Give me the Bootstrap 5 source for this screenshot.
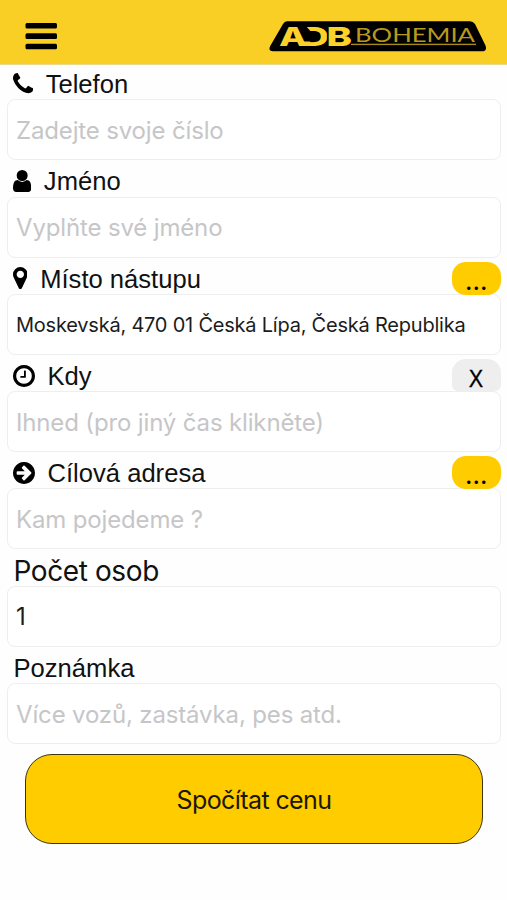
<!DOCTYPE html>
<html lang="cs">
<head>
<meta charset="utf-8">
<meta name="viewport" content="width=device-width, initial-scale=1">
<title>ADB Bohemia</title>
<link href="https://cdn.jsdelivr.net/npm/bootstrap@5.3.0/dist/css/bootstrap.min.css" rel="stylesheet">
<style>
body{font-family:"Liberation Sans",Arial,sans-serif;color:#111;background:#fefefe;overflow:hidden}
.topbar{height:65px;background:#f9cf25;border-bottom:1px solid #e9d98c;padding:0 20px 0 25px}
.menu-btn{width:32px;height:27px;margin-top:8px}
.logo{width:218px;height:32px;margin-top:7px}
.field{height:97.3px}
.field-head{height:34.3px;padding-left:5.5px}
.field-head label{font-size:25.6px;line-height:34px;padding-top:4px;gap:13px;white-space:nowrap}
.field-head svg{height:22px;fill:#000;display:block;margin-top:-1px}
.field .form-control{height:61px;border:1.5px solid #eee;border-radius:8px;padding:1px 8px 0;font-family:Inter,"Noto Sans",sans-serif;font-size:24px;letter-spacing:-.15px;color:#1c1c1c;background:#fff}
.field .form-control::placeholder{color:#c6c6c8;opacity:1}
.field .form-control.address{font-size:20px;letter-spacing:-.22px}
.field-head label.text-only{padding:2.5px 0 0 1px}
.field-head label.persons{font-family:Inter,"Noto Sans",sans-serif;font-size:28px;letter-spacing:-.4px}
.pill{width:48.5px;height:33px;margin:2px .5px 0 0;border-radius:14px;background:#fc0;font-family:Inter,sans-serif;font-size:26px;line-height:38px;color:#000}
.pill-clear{height:32px;background:#eee;border-radius:14px 14px 6px 6px;font-family:"Liberation Sans",Arial,sans-serif;font-size:24px;line-height:40px;-webkit-text-stroke:.3px #000}
.pill-clear span{display:inline-block;transform:scaleX(.9)}
.submit{height:90.5px;margin:7.5px 18px 0;padding:3px 0 0;border:1.5px solid #3d3510;border-radius:27px;background:#fc0;font-family:Inter,"Noto Sans",sans-serif;font-size:25px;letter-spacing:-.6px;color:#1c1700}
</style>
<script src="https://cdn.jsdelivr.net/npm/bootstrap@5.3.0/dist/js/bootstrap.bundle.min.js"></script>
</head>
<body>
<header class="topbar d-flex align-items-center justify-content-between">
  <button class="menu-btn btn p-0 border-0 d-flex" aria-label="Menu">
    <svg width="32" height="27" viewBox="0 0 32 27"><g fill="#000"><rect x=".5" y="0" width="31.5" height="5.6" rx="1.5"/><rect x=".5" y="10.3" width="31.5" height="5.6" rx="1.5"/><rect x=".5" y="20.7" width="31.5" height="5.6" rx="1.5"/></g></svg>
  </button>
  <svg class="logo" viewBox="269 20 218 32" role="img" aria-label="ADB Bohemia">
    <path d="M287 21.3H470Q473 21.3 475 24L485.500 45.500Q487.500 51.300 482 51.300H273Q267.500 51.300 270.500 45.500L283 24Q284.500 21.300 287 21.300Z" fill="#000"/>
    <g fill="#fbd12a" font-family="Inter" font-weight="800" font-size="26.300">
      <text x="301" y="45.800" textLength="28" lengthAdjust="spacingAndGlyphs">D</text>
      <path d="M299 26H306L313 34V41.500H303Z" fill="#000"/>
      <text x="279" y="45.800" textLength="28" lengthAdjust="spacingAndGlyphs">A</text>
      <text x="326.500" y="45.800" textLength="25.500" lengthAdjust="spacingAndGlyphs" stroke="#000" stroke-width="2.400" paint-order="stroke">B</text>
    </g>
    <text x="355" y="42" font-family="Lato" font-size="19.500" textLength="120" lengthAdjust="spacingAndGlyphs" fill="#b99a1c">BOHEMIA</text>
    <rect x="351" y="43.700" width="125" height="1.400" fill="#a88b18"/>
  </svg>
</header>
<main class="px-0">
<form style="padding:0 6px 0 7px">
  <div class="field">
    <div class="field-head d-flex justify-content-between">
      <label for="tel" class="d-flex align-items-center"><svg viewBox="192 128 1408 1536"><path d="M1600 1240q0 27-10 70.500t-21 68.500q-21 50-122 106-94 51-186 51-27 0-53-3.500t-57.500-12.500-47-14.500-55.500-20.500-49-18q-98-35-175-83-127-79-264-216t-216-264q-48-77-83-175-3-9-18-49t-20.500-55.500-14.500-47-12.500-57.500-3.500-53q0-92 51-186 56-101 106-122 25-11 68.500-21t70.500-10q14 0 21 3 18 6 53 76 11 19 30 54t35 63.500 31 53.500q3 4 17.500 25t21.500 35.500 7 28.500q0 20-28.500 50t-62 55-62 53-28.500 46q0 9 5 22.500t8.500 20.500 14 24 11.500 19q76 137 174 235t235 174q2 1 19 11.500t24 14 20.500 8.500 22.500 5q18 0 46-28.500t53-62 55-62 50-28.500q14 0 28.500 7t35.500 21.500 25 17.500q25 15 53.500 31t63.500 35 54 30q70 35 76 53 3 7 3 21z"/></svg><span>Telefon</span></label>
    </div>
    <input id="tel" type="text" class="form-control shadow-none" placeholder="Zadejte svoje číslo">
  </div>
  <div class="field">
    <div class="field-head d-flex justify-content-between">
      <label for="name" class="d-flex align-items-center"><svg viewBox="256 128 1280 1536"><path d="M1536 1399q0 109-62.500 187t-150.500 78h-854q-88 0-150.500-78t-62.500-187q0-85 8.500-160.500t31.500-152 58.500-131 94-89 134.500-34.500q131 128 313 128t313-128q76 0 134.500 34.500t94 89 58.500 131 31.500 152 8.500 160.500zm-256-887q0 159-112.500 271.500t-271.500 112.500-271.500-112.500-112.500-271.500 112.500-271.500 271.500-112.500 271.500 112.500 112.500 271.500z"/></svg><span>Jméno</span></label>
    </div>
    <input id="name" type="text" class="form-control shadow-none" placeholder="Vyplňte své jméno">
  </div>
  <div class="field">
    <div class="field-head d-flex justify-content-between">
      <label for="from" class="d-flex align-items-center"><svg viewBox="384 128 1024 1536"><path d="M1152 640q0-106-75-181t-181-75-181 75-75 181 75 181 181 75 181-75 75-181zm256 0q0 109-33 179l-364 774q-16 33-47.500 52t-67.500 19-67.500-19-46.500-52l-365-774q-33-70-33-179 0-212 150-362t362-150 362 150 150 362z"/></svg><span>Místo nástupu</span></label>
      <button type="button" class="pill btn border-0 p-0">...</button>
    </div>
    <input id="from" type="text" class="form-control address shadow-none" value="Moskevská, 470 01 Česká Lípa, Česká Republika">
  </div>
  <div class="field">
    <div class="field-head d-flex justify-content-between">
      <label for="when" class="d-flex align-items-center"><svg viewBox="128 128 1536 1536"><path d="M1024 544v448q0 14-9 23t-23 9h-320q-14 0-23-9t-9-23v-64q0-14 9-23t23-9h224v-352q0-14 9-23t23-9h64q14 0 23 9t9 23zm416 352q0-148-73-273t-198-198-273-73-273 73-198 198-73 273 73 273 198 198 273 73 273-73 198-198 73-273zm224 0q0 209-103 385.500t-279.500 279.500-385.500 103-385.500-103-279.500-279.500-103-385.500 103-385.500 279.500-279.500 385.500-103 385.500 103 279.500 279.500 103 385.500z"/></svg><span>Kdy</span></label>
      <button type="button" class="pill pill-clear btn border-0 p-0"><span>X</span></button>
    </div>
    <input id="when" type="text" class="form-control shadow-none" placeholder="Ihned (pro jiný čas klikněte)">
  </div>
  <div class="field">
    <div class="field-head d-flex justify-content-between">
      <label for="to" class="d-flex align-items-center"><svg viewBox="128 128 1536 1536"><path d="M1413 896q0-27-18-45l-91-91-362-362q-18-18-45-18t-45 18l-91 91q-18 18-18 45t18 45l189 189h-502q-26 0-45 19t-19 45v128q0 26 19 45t45 19h502l-189 189q-19 19-19 45t19 45l91 91q18 18 45 18t45-18l362-362 91-91q18-18 18-45zm251 0q0 209-103 385.500t-279.500 279.500-385.500 103-385.500-103-279.500-279.500-103-385.500 103-385.500 279.500-279.500 385.500-103 385.500 103 279.500 279.500 103 385.500z" fill-rule="evenodd"/></svg><span>Cílová adresa</span></label>
      <button type="button" class="pill btn border-0 p-0">...</button>
    </div>
    <input id="to" type="text" class="form-control shadow-none" placeholder="Kam pojedeme ?">
  </div>
  <div class="field">
    <div class="field-head d-flex"><label for="persons" class="persons text-only">Počet osob</label></div>
    <input id="persons" type="text" class="form-control shadow-none" value="1">
  </div>
  <div class="field">
    <div class="field-head d-flex"><label for="note" class="text-only">Poznámka</label></div>
    <input id="note" type="text" class="form-control shadow-none" placeholder="Více vozů, zastávka, pes atd.">
  </div>
  <div class="d-flex"><button type="button" class="submit btn flex-fill">Spočítat cenu</button></div>
</form>
</main>
</body>
</html>
